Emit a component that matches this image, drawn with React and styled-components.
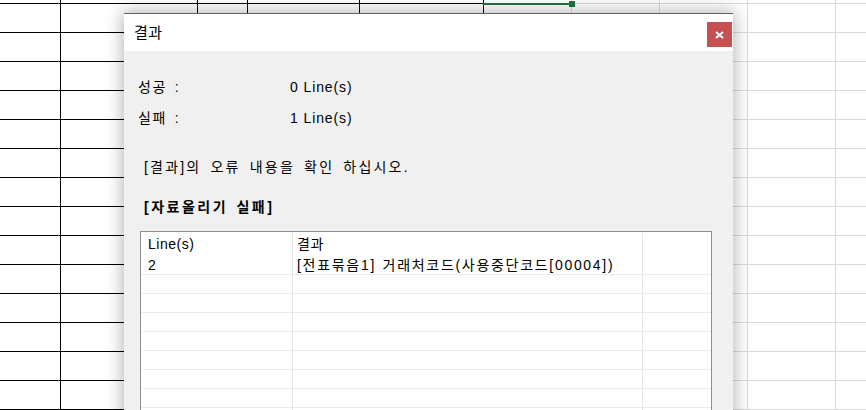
import React from "react";
import styled, { createGlobalStyle } from "styled-components";

// global
const GlobalStyle = createGlobalStyle`
  html, body {
    margin: 0;
    padding: 0;
    background: #ffffff;
    overflow: hidden;
  }
  body {
    font-family: "Liberation Sans", "Noto Sans CJK KR", sans-serif;
    color: #000000;
  }
`;

// spreadsheet behind the dialog
const COLS = [61, 137, 50, 112, 124, 88, 88, 88, 88, 88];
const DARK_COLS = 5;
const ROWS = 15;

const Page = styled.div`
  position: relative;
  width: 866px;
  height: 410px;
  overflow: hidden;
`;

const Sheet = styled.div`
  display: grid;
  grid-template-columns: ${COLS.map(w => `${w}px`).join(" ")};
  grid-auto-rows: 29px;
  margin-top: -25px;
`;

const Cell = styled.div`
  position: relative;
  box-sizing: border-box;
  border-right: 1px solid ${p => (p.$dark ? "#000000" : "#dadada")};
  border-bottom: 1px solid ${p => (p.$dark ? "#000000" : "#dadada")};
`;

const Selection = styled.div`
  position: absolute;
  z-index: 2;
  left: -1px;
  right: 0;
  bottom: -2px;
  height: 2px;
  background: #217346;

  &::after {
    content: "";
    position: absolute;
    right: -4px;
    top: -2px;
    width: 6px;
    height: 6px;
    background: #217346;
  }
`;

// dialog
const Dialog = styled.div`
  position: absolute;
  z-index: 5;
  left: 124px;
  top: 13px;
  width: 609px;
  height: 420px;
  display: flex;
  flex-direction: column;
  border-top: 1px solid #626262;
  background: #f0f0f0;
  box-shadow: 0 0 16px 2px rgba(0, 0, 0, 0.28);
`;

const TitleBar = styled.div`
  height: 37px;
  display: flex;
  align-items: flex-start;
  justify-content: space-between;
  background: #ffffff;
  padding: 0 1px 0 10px;
`;

const Title = styled.div`
  margin-top: 9px;
  font-size: 15px;
  line-height: 20px;
  letter-spacing: 0.5px;
`;

const CloseButton = styled.button`
  margin-top: 8px;
  width: 25px;
  height: 25px;
  border: none;
  padding: 0;
  display: flex;
  align-items: center;
  justify-content: center;
  background: #c75050;
  cursor: pointer;
`;

const Body = styled.div`
  display: flex;
  flex-direction: column;
  padding: 26px 21px 0 16px;
  font-size: 14px;
  line-height: 20px;
`;

const CountRow = styled.div`
  display: grid;
  grid-template-columns: 152px 1fr;
  margin-left: -2px;
  margin-bottom: 11px;
`;

const Label = styled.span`
  letter-spacing: 1.7px;
  word-spacing: 2px;
`;

const Value = styled.span`
  letter-spacing: 0.9px;
`;

const Message = styled.div`
  margin-top: 18px;
  padding-left: 4px;
  letter-spacing: 2.2px;
  word-spacing: 3px;
`;

const Heading = styled.div`
  margin-top: 20px;
  padding-left: 4px;
  font-weight: bold;
  letter-spacing: 2.5px;
  word-spacing: 2px;
`;

const Table = styled.div`
  margin-top: 14px;
  background: #ffffff;
  border: 1px solid #8e8f94;
  height: 200px;
`;

const Row = styled.div`
  display: grid;
  grid-template-columns: 151px 350px 1fr;
  height: ${p => (p.$header ? "24px" : "19px")};
  box-sizing: border-box;
  border-bottom: ${p => (p.$header ? "none" : "1px solid #ebebeb")};
  padding-top: ${p => (p.$header ? "1px" : "0")};
`;

const TableCell = styled.div`
  box-sizing: border-box;
  border-left: ${p => (p.$sep ? "1px solid #e6e6e6" : "none")};
  padding-left: ${p => (p.$sep ? "4px" : "7px")};
  line-height: ${p => (p.$header ? "22px" : "18px")};
  white-space: nowrap;
  font-size: 14px;
  letter-spacing: ${p => (p.$header ? "0.5px" : "1.7px")};
  word-spacing: 1px;
`;

function CloseIcon() {
  return (
    <svg width="9" height="8" viewBox="0 0 9 8">
      <path d="M1 1 L8 7 M8 1 L1 7" stroke="#ffffff" strokeWidth="2" />
    </svg>
  );
}

function App() {
  const rows = [];
  for (let i = 0; i < 9; i++) {
    rows.push(i);
  }

  return (
    <>
      <GlobalStyle />
      <Page>
        <Sheet>
          {Array.from({ length: ROWS }).map((_, r) =>
            COLS.map((w, c) => (
              <Cell key={`${r}-${c}`} $dark={c < DARK_COLS}>
                {r === 0 && c === 5 && <Selection />}
              </Cell>
            ))
          )}
        </Sheet>

        <Dialog>
          <TitleBar>
            <Title>결과</Title>
            <CloseButton>
              <CloseIcon />
            </CloseButton>
          </TitleBar>
          <Body>
            <CountRow>
              <Label>성공 :</Label>
              <Value>0 Line(s)</Value>
            </CountRow>
            <CountRow>
              <Label>실패 :</Label>
              <Value>1 Line(s)</Value>
            </CountRow>
            <Message>[결과]의 오류 내용을 확인 하십시오.</Message>
            <Heading>[자료올리기 실패]</Heading>
            <Table>
              <Row $header>
                <TableCell $header>Line(s)</TableCell>
                <TableCell $header $sep>결과</TableCell>
                <TableCell $header $sep></TableCell>
              </Row>
              <Row>
                <TableCell>2</TableCell>
                <TableCell $sep>[전표묶음1] 거래처코드(사용중단코드[00004])</TableCell>
                <TableCell $sep></TableCell>
              </Row>
              {rows.map(i => (
                <Row key={i}>
                  <TableCell></TableCell>
                  <TableCell $sep></TableCell>
                  <TableCell $sep></TableCell>
                </Row>
              ))}
            </Table>
          </Body>
        </Dialog>
      </Page>
    </>
  );
}

export default App;
